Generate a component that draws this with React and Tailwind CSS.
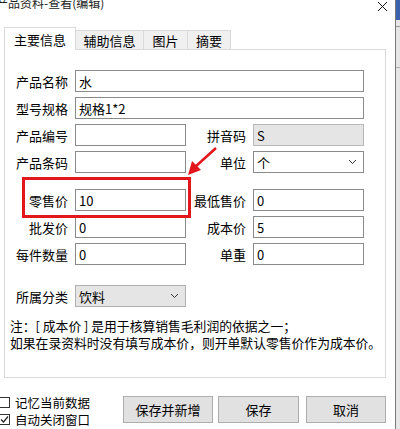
import React from 'react'

const font = { fontFamily: '"Noto Sans CJK SC", "Microsoft YaHei", sans-serif' }

function Chevron() {
  return (
    <svg width="9" height="6" viewBox="0 0 9 6" className="shrink-0">
      <polyline points="1,1 4.5,4.5 8,1" fill="none" stroke="#333" strokeWidth="1" />
    </svg>
  )
}

function Field({ value, w = 'w-[111px]', gray }) {
  return (
    <div
      className={`${w} h-[22px] border flex items-center px-[3px] text-[13px] leading-none text-black ${
        gray ? 'bg-[#e5e5e5] border-[#b8b8b8]' : 'bg-white border-[#8a8a8a]'
      }`}
    >
      {value}
    </div>
  )
}

function Select({ value, gray }) {
  return (
    <div
      className={`w-[111px] h-[22px] border flex items-center justify-between pl-[3px] pr-[6px] text-[13px] leading-none text-black ${
        gray ? 'bg-[#e5e5e5] border-[#b0b0b0]' : 'bg-white border-[#8a8a8a]'
      }`}
    >
      <span>{value}</span>
      <Chevron />
    </div>
  )
}

function Label({ children, w = 'w-[63px]' }) {
  return <div className={`${w} shrink-0 text-right text-[13px] leading-none text-black`}>{children}</div>
}

function Row({ left, right, className = '' }) {
  return (
    <div className={`flex items-center h-[22px] ${className}`}>
      <Label>{left.label}</Label>
      <div className="ml-[7px]">{left.field}</div>
      {right && (
        <>
          <Label w="w-[60px]">{right.label}</Label>
          <div className="ml-[7px]">{right.field}</div>
        </>
      )}
    </div>
  )
}

function Check({ checked, children }) {
  return (
    <div className="flex items-center h-[17px] text-[12.5px] leading-[17px] text-black">
      <div className="w-[11px] h-[11px] border border-[#333] bg-white flex items-center justify-center">
        {checked && (
          <svg width="9" height="9" viewBox="0 0 9 9">
            <polyline points="1,4.5 3.5,7 8,1.5" fill="none" stroke="#222" strokeWidth="1.2" />
          </svg>
        )}
      </div>
      <span className="ml-[5px]">{children}</span>
    </div>
  )
}

function Btn({ w, children }) {
  return (
    <button className={`${w} h-[27px] bg-[#e1e1e1] border border-[#adadad] text-[13px] leading-none text-black`}>
      {children}
    </button>
  )
}

export default function App() {
  return (
    <div className="w-[400px] h-[429px] bg-white flex overflow-hidden relative" style={font}>
      <div className="w-[395px] pl-[4px] pr-[9px] flex flex-col">
        {/* title bar */}
        <div className="h-[27px] flex justify-between items-start -ml-[4px]">
          <span className="text-[12px] leading-[16px] -mt-[5px] -ml-[4px] text-[#222]">产品资料-查看(编辑)</span>
          <svg width="11" height="11" viewBox="0 0 11 11" className="mt-[1px] mr-[-2px]">
            <path d="M1 1 L10 10 M10 1 L1 10" stroke="#111" strokeWidth="1" />
          </svg>
        </div>

        {/* tabs */}
        <div className="flex items-end text-[13px] leading-none text-black">
          <div className="relative z-10 w-[72px] h-[23px] -mb-[1px] bg-white border border-b-0 border-[#d9d9d9] flex items-center justify-center">
            主要信息
          </div>
          <div className="w-[68px] h-[19px] bg-[#f0f0f0] border border-l-0 border-b-0 border-[#d9d9d9] flex items-center justify-center">
            辅助信息
          </div>
          <div className="w-[44px] h-[19px] bg-[#f0f0f0] border border-l-0 border-b-0 border-[#d9d9d9] flex items-center justify-center">
            图片
          </div>
          <div className="w-[43px] h-[19px] bg-[#f0f0f0] border border-l-0 border-b-0 border-[#d9d9d9] flex items-center justify-center">
            摘要
          </div>
        </div>

        {/* panel */}
        <div className="h-[329px] border border-[#d9d9d9] bg-white pt-[20px]">
          <Row left={{ label: '产品名称', field: <Field value="水" w="w-[289px]" /> }} />
          <Row className="mt-[5px]" left={{ label: '型号规格', field: <Field value="规格1*2" w="w-[289px]" /> }} />
          <Row
            className="mt-[5px]"
            left={{ label: '产品编号', field: <Field value="" /> }}
            right={{ label: '拼音码', field: <Field value="S" gray /> }}
          />
          <Row
            className="mt-[5px]"
            left={{ label: '产品条码', field: <Field value="" /> }}
            right={{ label: '单位', field: <Select value="个" /> }}
          />
          <Row
            className="mt-[16px]"
            left={{ label: '零售价', field: <Field value="10" /> }}
            right={{ label: '最低售价', field: <Field value="0" /> }}
          />
          <Row
            className="mt-[5px]"
            left={{ label: '批发价', field: <Field value="0" /> }}
            right={{ label: '成本价', field: <Field value="5" /> }}
          />
          <Row
            className="mt-[5px]"
            left={{ label: '每件数量', field: <Field value="0" /> }}
            right={{ label: '单重', field: <Field value="0" /> }}
          />
          <Row className="mt-[20px]" left={{ label: '所属分类', field: <Select value="饮料" gray /> }} />

          <div className="mt-[10px] pl-[5px] text-[12.8px] leading-[18px] text-black whitespace-nowrap">
            <div>注：[ 成本价 ] 是用于核算销售毛利润的依据之一；</div>
            <div className="-mt-[1px]">如果在录资料时没有填写成本价，则开单默认零售价作为成本价。</div>
          </div>
        </div>

        {/* footer */}
        <div className="flex items-start justify-between mt-[18px]">
          <div className="-ml-[5px] -mt-[2px] flex flex-col">
            <Check>记忆当前数据</Check>
            <Check checked>自动关闭窗口</Check>
          </div>
          <div className="flex">
            <Btn w="w-[90px]">保存并新增</Btn>
            <div className="ml-[5px]">
              <Btn w="w-[81px]">保存</Btn>
            </div>
            <div className="ml-[7px]">
              <Btn w="w-[80px]">取消</Btn>
            </div>
          </div>
        </div>
      </div>

      {/* neighbouring window edge */}
      <div className="w-[5px] border-l border-[#7a7a7a] bg-[#e6e6e6] flex flex-col">
        <div className="h-[20px] bg-[#3a62ad]" />
        <div className="h-[1px] mt-[6px] bg-[#9a9a9a]" />
        <div className="h-[1px] mt-[40px] bg-[#b0b0b0]" />
      </div>

      {/* annotation: red box and arrow */}
      <div className="absolute left-[22px] top-[177px] w-[169px] h-[41px] border-[3px] border-[#e3161c] pointer-events-none" />
      <svg className="absolute left-0 top-0 pointer-events-none" width="400" height="429">
        <line x1="216" y1="148" x2="195" y2="167" stroke="#e3161c" strokeWidth="2.5" />
        <polygon points="188,175 192,161 201,170" fill="#e3161c" />
      </svg>
    </div>
  )
}
